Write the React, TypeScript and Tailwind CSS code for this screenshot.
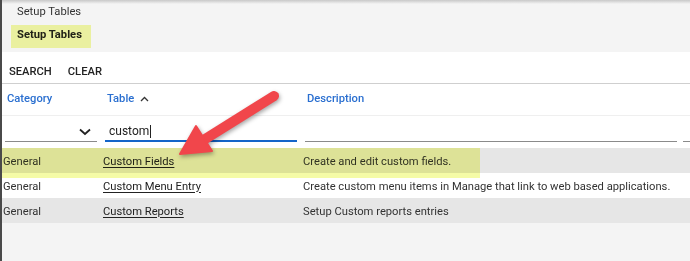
import React from "react";

const font = { fontFamily: "Roboto, 'Liberation Sans', sans-serif" };

function ChevronDown() {
  return (
    <svg width="12" height="8" viewBox="0 0 12 8" className="block">
      <path d="M1 1.5 L6 6 L11 1.5" fill="none" stroke="#222" strokeWidth="1.8" />
    </svg>
  );
}

function ChevronUp() {
  return (
    <svg width="9" height="6" viewBox="0 0 9 6" className="block">
      <path d="M1 5 L4.5 1.5 L8 5" fill="none" stroke="#333" strokeWidth="1.3" />
    </svg>
  );
}

const rows = [
  { cat: "General", table: "Custom Fields", desc: "Create and edit custom fields.", gray: true },
  { cat: "General", table: "Custom Menu Entry", desc: "Create custom menu items in Manage that link to web based applications.", gray: false },
  { cat: "General", table: "Custom Reports", desc: "Setup Custom reports entries", gray: true },
];

export default function App() {
  return (
    <div
      className="relative w-[690px] h-[261px] overflow-hidden bg-[#f4f4f4] border-l-2 border-[#4a4a4a] text-[11.2px] text-[#333]"
      style={font}
    >
      {/* top shadow */}
      <div className="absolute left-0 top-0 w-full h-[4px] bg-gradient-to-b from-[#c8c8c8] to-[#f4f4f4]" />

      {/* header */}
      <div className="h-[52px] pl-[15px] pt-[5px]">
        <div className="h-[14px] leading-[14px]">Setup Tables</div>
        <div className="mt-[9px] h-[14px] leading-[14px] font-bold text-[#222]">Setup Tables</div>
      </div>

      {/* toolbar */}
      <div className="h-[32px] pt-[9px] bg-white flex items-center gap-[16px] pl-[7px] font-medium text-[#222] border-b border-[#cfcfcf]">
        <span>SEARCH</span>
        <span>CLEAR</span>
      </div>

      {/* column header */}
      <div className="h-[32px] pb-[1px] bg-white flex items-center border-b border-[#efefef] text-[#2a6fd0] font-medium">
        <div className="w-[98px] pl-[5px]">Category</div>
        <div className="w-[200px] pl-[7px] flex items-center gap-[6px]">
          <span>Table</span>
          <ChevronUp />
        </div>
        <div className="flex-1 pl-[7px]">Description</div>
      </div>

      {/* filter row */}
      <div className="h-[32px] bg-white flex items-end pb-[6px]">
        <div className="w-[98px] pl-[3px] pr-[3px]">
          <div className="h-[20px] border-b border-[#8a8a8a] flex items-center justify-end pr-[6px]">
            <ChevronDown />
          </div>
        </div>
        <div className="w-[200px] pl-[5px] pr-[3px]">
          <div className="h-[20px] border-b-2 border-[#1565c8] flex items-center pl-[4px] text-[12px] text-[#222]">
            custom<span className="inline-block w-[1px] h-[13px] bg-[#222] ml-[1px]" />
          </div>
        </div>
        <div className="w-[380px] pl-[5px] pr-[3px]">
          <div className="h-[20px] border-b border-[#8a8a8a]" />
        </div>
        <div className="flex-1 pl-[3px]">
          <div className="h-[20px] border-b border-[#8a8a8a]" />
        </div>
      </div>

      {/* data rows */}
      {rows.map((r) => (
        <div
          key={r.table}
          className={`h-[25px] pt-[3px] flex items-center ${r.gray ? "bg-[#e6e6e6]" : "bg-white"}`}
        >
          <div className="w-[99px] pl-[1px]">{r.cat}</div>
          <div className="w-[200px] pl-[2px]">
            <span className="underline underline-offset-2 text-[#222]">{r.table}</span>
          </div>
          <div className="flex-1 pl-[2px] whitespace-nowrap">{r.desc}</div>
        </div>
      ))}

      {/* yellow highlights */}
      <div className="absolute left-[9px] top-[25px] w-[80px] h-[23px] bg-[#f5fba7] mix-blend-multiply" />
      <div className="absolute left-0 top-[148px] w-[478px] h-[30px] bg-[#f5fba7] mix-blend-multiply" />

      {/* red arrow */}
      <svg
        className="absolute left-0 top-0 pointer-events-none"
        width="690"
        height="261"
        viewBox="-2 0 690 261"
        style={{ filter: "drop-shadow(1px 2px 2px rgba(0,0,0,0.35))" }}
      >
        <line x1="270" y1="96" x2="198" y2="141" stroke="#f1464b" strokeWidth="10" strokeLinecap="round" />
        <polygon points="176,154 192,126 208,151" fill="#f1464b" stroke="#f1464b" strokeWidth="2" strokeLinejoin="round" />
      </svg>
    </div>
  );
}
